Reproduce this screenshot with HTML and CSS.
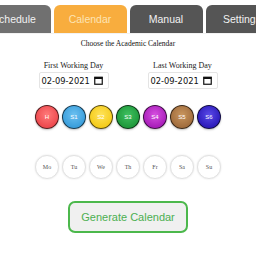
FILE: index.html
```html
<!DOCTYPE html>
<html>
<head>
<meta charset="utf-8">
<link rel="stylesheet" href="styles.css">
</head>
<body>
<div class="tabs">
  <div class="tab tab-light">Schedule</div>
  <div class="tab tab-active">Calendar</div>
  <div class="tab tab-dark">Manual</div>
  <div class="tab tab-dark">Settings</div>
</div>
<div class="content">
  <div class="heading">Choose the Academic Calendar</div>
  <div class="dates">
    <div class="field">
      <div class="label">First Working Day</div>
      <div class="date">
        <span class="date-text">02-09-2021</span>
        <svg class="cal" width="9" height="9" viewBox="0 0 9 9"><rect x="0.75" y="1.25" width="7.5" height="7" fill="none" stroke="#111" stroke-width="1.2"/><rect x="0.5" y="1" width="8" height="2" fill="#111"/></svg>
      </div>
    </div>
    <div class="field">
      <div class="label">Last Working Day</div>
      <div class="date">
        <span class="date-text">02-09-2021</span>
        <svg class="cal" width="9" height="9" viewBox="0 0 9 9"><rect x="0.75" y="1.25" width="7.5" height="7" fill="none" stroke="#111" stroke-width="1.2"/><rect x="0.5" y="1" width="8" height="2" fill="#111"/></svg>
      </div>
    </div>
  </div>
  <div class="row colors">
    <div class="dot c-h">H</div>
    <div class="dot c-s1">S1</div>
    <div class="dot c-s2">S2</div>
    <div class="dot c-s3">S3</div>
    <div class="dot c-s4">S4</div>
    <div class="dot c-s5">S5</div>
    <div class="dot c-s6">S6</div>
  </div>
  <div class="row days">
    <div class="day">Mo</div>
    <div class="day">Tu</div>
    <div class="day">We</div>
    <div class="day">Th</div>
    <div class="day">Fr</div>
    <div class="day">Sa</div>
    <div class="day">Su</div>
  </div>
  <button class="generate">Generate Calendar</button>
</div>
</body>
</html>
```
FILE: styles.css
```css
html, body {
  margin: 0;
  padding: 0;
  background: #fff;
  width: 256px;
  height: 256px;
  overflow: hidden;
}
.tabs {
  display: flex;
  justify-content: center;
  gap: 3px;
  padding-top: 5px;
  border-bottom: 1px solid #f2f2f2;
  width: 256px;
}
.tab {
  flex: 0 0 73px;
  height: 28px;
  border-radius: 6px 6px 0 0;
  display: flex;
  align-items: center;
  justify-content: center;
  font-family: "Liberation Sans", Arial, sans-serif;
  font-size: 10.5px;
  color: #f2f2f2;
}
.tab-light { background: #707070; }
.tab-active { background: #f8ad3e; color: #fde4b4; }
.tab-dark { background: #555555; }
.content {
  display: flex;
  flex-direction: column;
  align-items: center;
}
.heading {
  margin-top: 5px;
  line-height: 10px;
  font-family: "Liberation Serif", "Times New Roman", serif;
  font-size: 7.5px;
  color: #111;
}
.dates {
  display: flex;
  justify-content: center;
  gap: 39px;
  margin-top: 12px;
}
.field {
  display: flex;
  flex-direction: column;
  align-items: center;
  width: 70px;
}
.label {
  line-height: 10px;
  font-family: "Liberation Serif", "Times New Roman", serif;
  font-size: 8px;
  color: #222;
}
.date {
  margin-top: 1px;
  width: 70px;
  height: 17px;
  box-sizing: border-box;
  border: 1px solid #e4e4e4;
  border-radius: 2px;
  background: #fff;
  display: flex;
  align-items: center;
  justify-content: space-between;
  padding: 0 5px 0 2px;
}
.date-text {
  font-family: "DejaVu Sans", "Liberation Sans", sans-serif;
  font-size: 8.3px;
  color: #111;
}
.cal { display: block; }
.row {
  display: flex;
  justify-content: center;
  gap: 3px;
}
.colors { margin-top: 16px; }
.dot {
  width: 24px;
  height: 24px;
  box-sizing: border-box;
  border-radius: 50%;
  border: 1px solid rgba(0,0,0,0.65);
  display: flex;
  align-items: center;
  justify-content: center;
  font-family: "Liberation Sans", Arial, sans-serif;
  font-size: 6px;
  color: #fff;
  box-shadow: 0 1px 2px rgba(0,0,0,0.25);
}
.c-h  { background: radial-gradient(circle at 50% 40%, #ff7a7a, #ee4a4f 70%); }
.c-s1 { background: radial-gradient(circle at 50% 40%, #6cc0f0, #3b9fdc 70%); }
.c-s2 { background: radial-gradient(circle at 50% 40%, #ffe35a, #f5cc1c 70%); }
.c-s3 { background: radial-gradient(circle at 50% 40%, #40c060, #1f9a3c 70%); }
.c-s4 { background: radial-gradient(circle at 50% 40%, #d650e0, #aa1fbb 70%); }
.c-s5 { background: radial-gradient(circle at 50% 40%, #c8955e, #a26e3e 70%); }
.c-s6 { background: radial-gradient(circle at 50% 40%, #5a4ae8, #2d1cbc 70%); }
.days { margin-top: 26px; }
.day {
  width: 24px;
  height: 24px;
  box-sizing: border-box;
  border-radius: 50%;
  border: 1px solid #e2e2e2;
  background: #fff;
  box-shadow: 0 0 2px rgba(0,0,0,0.12);
  display: flex;
  align-items: center;
  justify-content: center;
  font-family: "Liberation Serif", "Times New Roman", serif;
  font-size: 6px;
  color: #555;
}
.generate {
  margin-top: 22px;
  width: 120px;
  height: 32px;
  box-sizing: border-box;
  border: 2px solid #4cb84c;
  border-radius: 7px;
  background: #f0f0f0;
  color: #4caf50;
  font-family: "Liberation Sans", Arial, sans-serif;
  font-size: 11px;
  padding: 0;
}
```
